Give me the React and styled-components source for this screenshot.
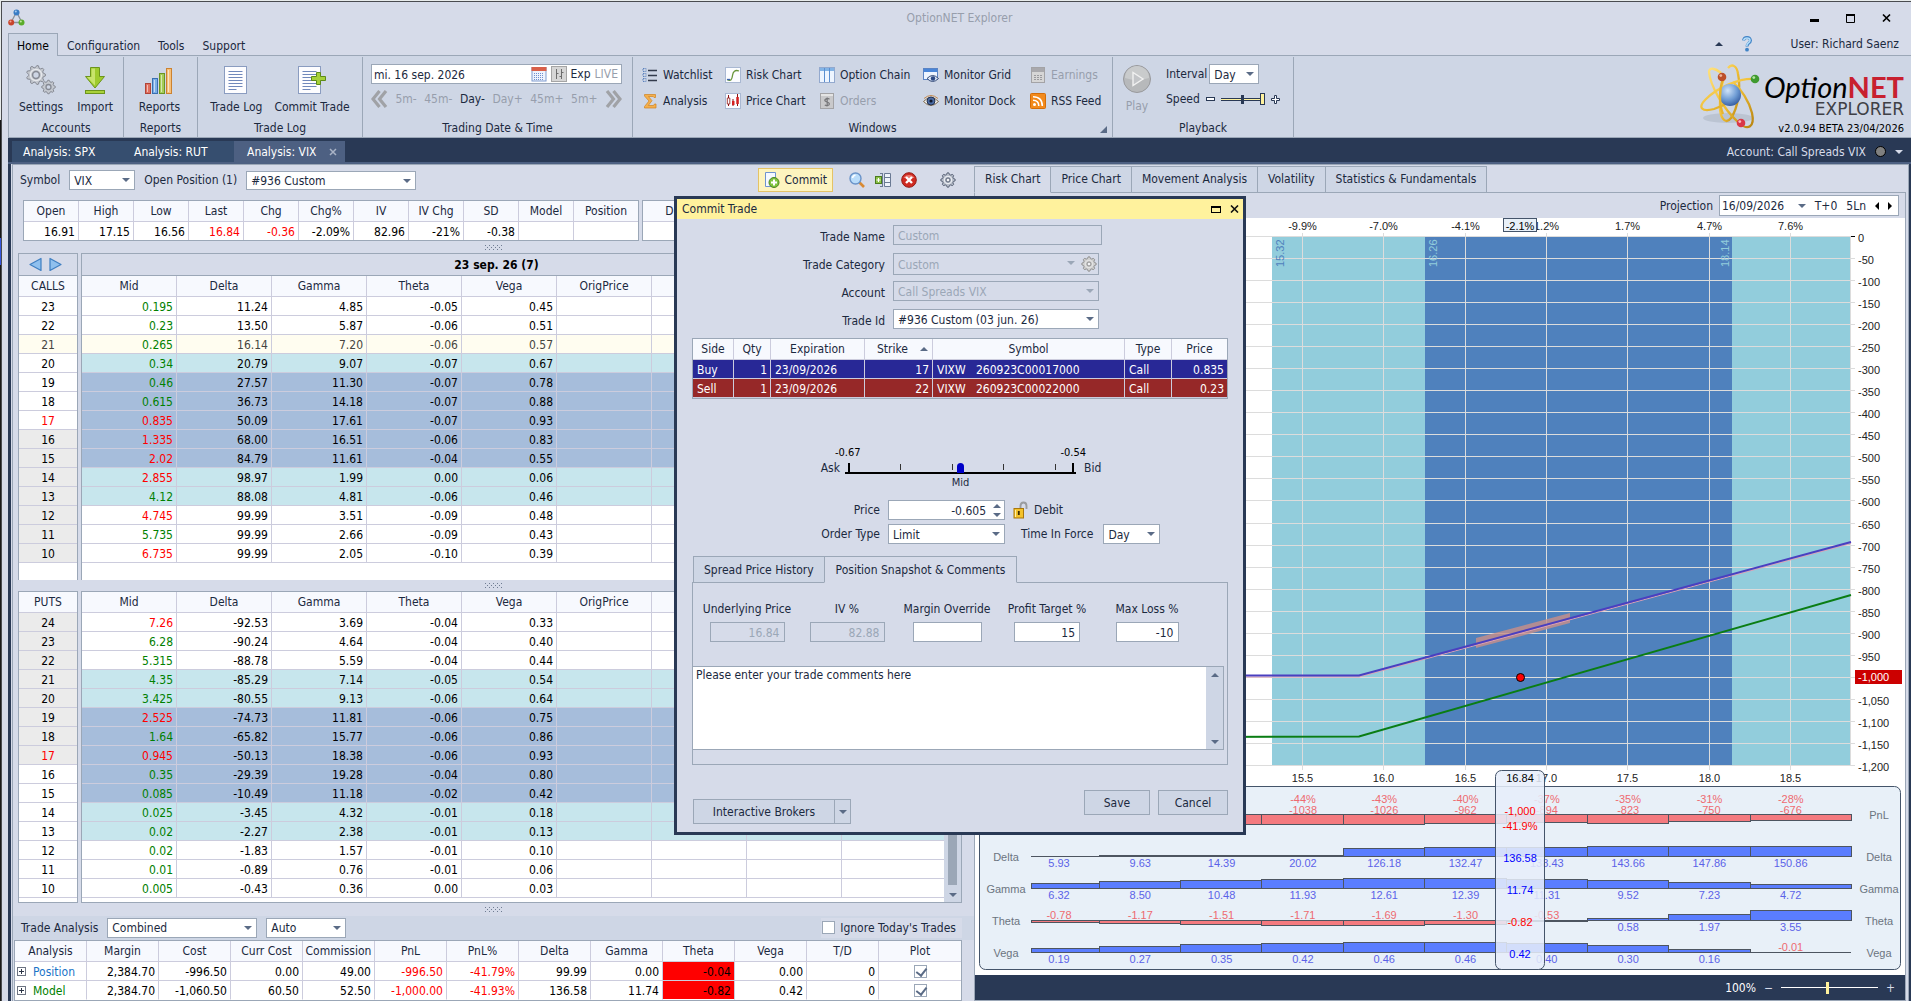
import styled, { createGlobalStyle, css } from "styled-components"

const GlobalStyle = createGlobalStyle`
  * {
    box-sizing: border-box;
  }

  body {
    margin: 0;
    background: #d6dbe9;
  }

  body, button, input, select, textarea {
    font-family: "DejaVu Sans Condensed", "DejaVu Sans", sans-serif;
    font-size: 12px;
    line-height: 14px;
    color: #1b293e;
  }

  button, input, select, textarea {
    margin: 0;
    padding: 0;
    border-radius: 0;
    outline: 0;
  }
`

const navy = "#293955"
const line = "#9ba7b7"
const panel = "#d6dbe9"
const ribbon = "#ced6e5"
const cellLine = "#ccccdd"

/* ---------- data ---------- */

const quote = [
  ["Open", "16.91"],
  ["High", "17.15"],
  ["Low", "16.56"],
  ["Last", "16.84", "#f00"],
  ["Chg", "-0.36", "#f00"],
  ["Chg%", "-2.09%"],
  ["IV", "82.96"],
  ["IV Chg", "-21%"],
  ["SD", "-0.38"],
  ["Model", ""],
  ["Position", ""],
]

const R = "#f00"
const G = "#008000"
const greekHeads = ["Mid", "Delta", "Gamma", "Theta", "Vega", "OrigPrice", "", "", ""]

// strike, mid colour, band, in the money, values
const calls = [
  [23, G, "", 0, "0.195 11.24 4.85 -0.05 0.45"],
  [22, G, "", 0, "0.23 13.50 5.87 -0.06 0.51"],
  [21, G, "hover", 0, "0.265 16.14 7.20 -0.06 0.57"],
  [20, G, "outer", 0, "0.34 20.79 9.07 -0.07 0.67"],
  [19, G, "inner", 0, "0.46 27.57 11.30 -0.07 0.78"],
  [18, G, "inner", 0, "0.615 36.73 14.18 -0.07 0.88"],
  [17, R, "inner", 0, "0.835 50.09 17.61 -0.07 0.93"],
  [16, R, "inner", 1, "1.335 68.00 16.51 -0.06 0.83"],
  [15, R, "inner", 1, "2.02 84.79 11.61 -0.04 0.55"],
  [14, R, "outer", 1, "2.855 98.97 1.99 0.00 0.06"],
  [13, G, "outer", 1, "4.12 88.08 4.81 -0.06 0.46"],
  [12, R, "", 1, "4.745 99.99 3.51 -0.09 0.48"],
  [11, G, "", 1, "5.735 99.99 2.66 -0.09 0.43"],
  [10, R, "", 1, "6.735 99.99 2.05 -0.10 0.39"],
]

const puts = [
  [24, R, "", 1, "7.26 -92.53 3.69 -0.04 0.33"],
  [23, G, "", 1, "6.28 -90.24 4.64 -0.04 0.40"],
  [22, G, "", 1, "5.315 -88.78 5.59 -0.04 0.44"],
  [21, G, "outer", 1, "4.35 -85.29 7.14 -0.05 0.54"],
  [20, G, "outer", 1, "3.425 -80.55 9.13 -0.06 0.64"],
  [19, R, "inner", 1, "2.525 -74.73 11.81 -0.06 0.75"],
  [18, G, "inner", 1, "1.64 -65.82 15.77 -0.06 0.86"],
  [17, R, "inner", 1, "0.945 -50.13 18.38 -0.06 0.93"],
  [16, G, "inner", 0, "0.35 -29.39 19.28 -0.04 0.80"],
  [15, G, "inner", 0, "0.085 -10.49 11.18 -0.02 0.42"],
  [14, G, "outer", 0, "0.025 -3.45 4.32 -0.01 0.18"],
  [13, G, "outer", 0, "0.02 -2.27 2.38 -0.01 0.13"],
  [12, G, "", 0, "0.02 -1.83 1.57 -0.01 0.10"],
  [11, G, "", 0, "0.01 -0.89 0.76 -0.01 0.06"],
  [10, G, "", 0, "0.005 -0.43 0.36 0.00 0.03"],
]

const analysisHeads = ["Analysis", "Margin", "Cost", "Curr Cost", "Commission", "PnL", "PnL%", "Delta", "Gamma", "Theta", "Vega", "T/D", "Plot"]
const analysisRows = [
  ["Position", "#1a74c8", "2,384.70 -996.50 0.00 49.00 -996.50 -41.79% 99.99 0.00 -0.04 0.00 0"],
  ["Model", G, "2,384.70 -1,060.50 60.50 52.50 -1,000.00 -41.93% 136.58 11.74 -0.82 0.42 0"],
]

const legs = [
  ["Buy", "1", "23/09/2026", "17", "VIXW   260923C00017000", "Call", "0.835"],
  ["Sell", "1", "23/09/2026", "22", "VIXW   260923C00022000", "Call", "0.23"],
]

/* ---------- shared parts ---------- */

const Arrow = styled.i`
  display: block;
  flex: none;
  width: 0;
  height: 0;
  border: 4px solid transparent;
  ${({ $dir = "down", $color = "#5a6b86", $size = 4 }) => {
    const side = { down: "top", up: "bottom", left: "right", right: "left" }[$dir]
    return css`
      border-width: ${$size}px;
      border-${side}-color: ${$color};
      border-${$dir === "down" ? "bottom" : $dir === "up" ? "top" : $dir}-width: 0;
    `
  }}
`

const SelectWrap = styled.span`
  position: relative;
  display: block;
  flex: none;
  width: ${({ $w }) => ($w ? $w + "px" : "auto")};

  select {
    appearance: none;
    display: block;
    width: 100%;
    height: ${({ $h = 20 }) => $h}px;
    padding: 1px 16px 0 4px;
    border: 1px solid ${line};
    background: #fff;
  }

  select:disabled {
    background: ${panel};
    color: ${line};
    opacity: 1;
  }

  > i {
    position: absolute;
    right: ${({ $right = 5 }) => $right}px;
    top: 8px;
    pointer-events: none;
  }
`

const Select = ({ id, label, w, h, value, disabled, right, children }) => (
  <SelectWrap $w={w} $h={h} $right={right}>
    <select id={id} aria-label={label} disabled={disabled} defaultValue={value}>
      <option>{value}</option>
    </select>
    <Arrow $color={disabled ? line : "#5a6b86"} />
    {children}
  </SelectWrap>
)

const TextInput = styled.input`
  display: block;
  width: ${({ $w }) => $w}px;
  height: 20px;
  padding: 1px ${({ $pad = 4 }) => $pad}px 0 4px;
  border: 1px solid ${line};
  background: #fff;
  text-align: ${({ $align = "left" }) => $align};

  &:disabled {
    background: ${panel};
    color: ${line};
  }
`

const Check = styled.input`
  appearance: none;
  display: block;
  flex: none;
  width: 13px;
  height: 13px;
  border: 1px solid ${line};
  background: #fff;

  &:checked::before {
    content: "";
    display: block;
    width: 5px;
    height: 8px;
    margin: 0 3px;
    border: solid #5a6b86;
    border-width: 0 2px 2px 0;
    transform: rotate(38deg);
  }
`

const DataTable = styled.table`
  width: 100%;
  table-layout: fixed;
  border-collapse: separate;
  border-spacing: 0;
  background: #fff;
  color: #000;

  th {
    height: 21px;
    padding: 0;
    font-weight: 400;
    color: #1b293e;
    background: #f7f9fe;
    white-space: nowrap;
  }

  td {
    height: 19px;
    padding: 1px 3px 0 0;
    text-align: right;
    white-space: pre;
  }

  th, td {
    border-right: 1px solid ${cellLine};
    border-bottom: 1px solid ${cellLine};
    overflow: hidden;
  }
`

const DotsRow = styled.div`
  display: flex;
  align-items: center;
  justify-content: center;
  height: ${({ $h }) => $h}px;

  svg {
    display: block;
  }
`

const Dots = ({ h }) => (
  <DotsRow $h={h}>
    <svg width="18" height="5" viewBox="0 0 18 5">
      <path d="M0 .5h18M0 4.500h18" stroke="#6f7c92" strokeDasharray="1 3" />
      <path d="M2 2.500h16" stroke="#6f7c92" strokeDasharray="1 3" />
    </svg>
  </DotsRow>
)

/* ---------- frame, title, ribbon ---------- */

const Screen = styled.div`
  min-height: 100vh;
  padding: 1px 0 0 1px;
  display: flex;
  background: linear-gradient(#e8ecec 0 120px, #151515 120px 238px, #3858e0 238px 265px, #1a1a1a 265px);
`

const AppWindow = styled.div`
  flex: 1;
  min-width: 0;
  display: flex;
  flex-direction: column;
  padding-left: 6px;
  border: solid #4a4c50;
  border-width: 1px 0 0 1px;
  background: ${panel};
`

const TitleBar = styled.header`
  display: grid;
  grid-template-columns: 1fr auto 1fr;
  align-items: center;
  height: 31px;
  color: #979eac;

  > svg {
    display: block;
  }
`

const WindowButtons = styled.div`
  display: flex;
  justify-content: flex-end;
  gap: 20px;
  padding-right: 17px;

  button {
    width: 16px;
    height: 16px;
    border: 0;
    background: none;
  }

  svg {
    display: block;
  }
`

const MenuBar = styled.nav`
  display: flex;
  height: 23px;
  border-bottom: 1px solid ${line};
`

const MenuTab = styled.a`
  height: 23px;
  padding: 6px 9px 0;
  color: ${({ $active }) => ($active ? "#000" : "#1b293e")};
  text-decoration: none;
  ${({ $active }) =>
    $active &&
    css`
      border: 1px solid ${line};
      border-bottom: 0;
      padding: 5px 8px 0;
      background: ${ribbon};
    `}
`

const MenuEnd = styled.div`
  display: flex;
  align-items: center;
  gap: 18px;
  margin-left: auto;
  padding-right: 12px;

  svg {
    display: block;
    margin-right: 20px;
  }
`

const RibbonBar = styled.section`
  display: flex;
  height: 82px;
  padding-top: 1px;
  background: ${ribbon};
  border: solid ${line};
  border-width: 0 0 1px 1px;
`

const Group = styled.div`
  display: flex;
  flex-direction: column;
  flex: none;
  width: ${({ $w }) => $w}px;
  border-right: 1px solid ${line};
`

const GroupBody = styled.div`
  flex: 1;
  display: flex;
  justify-content: center;
  gap: ${({ $gap = 12 }) => $gap}px;
  padding: ${({ $pad = "8px 8px 0" }) => $pad};
`

const GroupTitle = styled.div`
  position: relative;
  height: 16px;
  text-align: center;

  svg {
    position: absolute;
    right: 5px;
    bottom: 4px;
  }
`

const BigButton = styled.button`
  display: flex;
  flex-direction: column;
  align-items: center;
  gap: 5px;
  height: 50px;
  border: 0;
  background: none;
  white-space: nowrap;

  &:disabled {
    color: #979eac;
  }
`

const Stack = styled.div`
  display: flex;
  flex-direction: column;
  gap: ${({ $gap = 8 }) => $gap}px;
  width: 100%;
`

const DateField = styled.div`
  display: flex;
  align-items: center;
  gap: 4px;
  height: 20px;
  padding-right: 3px;
  border: 1px solid ${line};
  background: #fff;

  input {
    flex: 1;
    min-width: 0;
    height: 18px;
    padding: 1px 2px 0;
    border: 0;
    background: none;
  }

  button {
    border: 0;
    background: none;
  }

  button:disabled {
    color: #979eac;
  }
`

const StepRow = styled.div`
  display: flex;
  align-items: center;
  justify-content: space-between;

  button {
    border: 0;
    background: none;
  }

  button:disabled {
    color: #979eac;
  }

  svg {
    display: block;
  }
`

const WindowGrid = styled.div`
  flex: 1;
  display: grid;
  grid-template-columns: 83px 94px 104px 107px 1fr;
  grid-auto-rows: 26px;
`

const SmallButton = styled.button`
  display: flex;
  align-items: center;
  gap: 5px;
  border: 0;
  background: none;
  white-space: nowrap;

  &:disabled {
    color: #979eac;
  }
`

const InlineField = styled.div`
  display: flex;
  align-items: center;
  gap: ${({ $gap = 2 }) => $gap}px;
  height: 20px;
`

const Range = styled.input`
  appearance: none;
  width: ${({ $w }) => $w}px;
  height: 13px;
  background: ${({ $ticked, $track }) =>
    ($ticked ? `linear-gradient(${navy}, ${navy}) center / 3px 9px no-repeat, linear-gradient(${navy} 1px, #fff29d 1px 2px, ${navy} 2px)` : `linear-gradient(${$track}, ${$track})`)}
    center / 100% ${({ $ticked }) => ($ticked ? 3 : 1)}px no-repeat;

  &::-webkit-slider-thumb {
    appearance: none;
    width: ${({ $thumb = 4 }) => $thumb}px;
    height: 12px;
    border: ${({ $edge }) => ($edge ? "1px solid " + $edge : 0)};
    background: #fff29d;
  }
`

const Brand = styled.div`
  display: flex;
  align-items: flex-start;
  justify-content: flex-end;
  gap: 2px;
  flex: 1;
  padding: 6px 7px 0 0;
`

const BrandText = styled.div`
  display: flex;
  flex-direction: column;
  align-items: flex-end;
  padding-top: 9px;
  color: #000;

  strong {
    font: italic 400 29px/30px Lato, sans-serif;
    white-space: nowrap;
  }

  b {
    font-style: normal;
    font-weight: 700;
    color: #c8202f;
  }

  em {
    font: 400 17px/14px "DejaVu Sans", sans-serif;
    color: #3f4046;
  }

  small {
    padding-top: 6px;
    font-size: 11px;
  }
`

const DocBar = styled.div`
  display: flex;
  height: 26px;
  padding: 3px 0 0 4px;
  background: ${navy};
  border-bottom: 2px solid #4d6082;
`

const DocTab = styled.a`
  display: flex;
  align-items: center;
  gap: ${({ $active }) => ($active ? 12 : 17)}px;
  width: 111px;
  padding-left: ${({ $active }) => ($active ? 13 : 11)}px;
  background: ${({ $active }) => ($active ? "#4d6082" : "#364e6f")};
  color: #fff;
  text-decoration: none;
  white-space: nowrap;
`

const AccountInfo = styled.div`
  display: flex;
  align-items: center;
  gap: 9px;
  margin-left: auto;
  padding: 0 8px 0 0;
  color: ${panel};

  span {
    width: 11px;
    height: 11px;
    border: 1px solid #000;
    border-radius: 50%;
    background: #808080;
  }
`

/* ---------- workspace ---------- */

const Workspace = styled.main`
  flex: 1;
  display: flex;
  padding-left: 1px;
  border: solid ${navy};
  border-width: 0 2px 0 3px;
`

const WorkspaceInner = styled.div`
  flex: 1;
  display: flex;
  border: 1px solid ${line};
  border-bottom: 0;
`

const LeftPane = styled.section`
  flex: 0 1 961px;
  min-width: 0;
  display: flex;
  flex-direction: column;
`

const SymbolBar = styled.div`
  display: flex;
  align-items: center;
  gap: 9px;
  height: 35px;
  padding: 0 18px 5px 7px;
`

const SymbolTools = styled.div`
  display: flex;
  align-items: center;
  gap: 10px;
  margin-left: auto;

  button {
    height: 16px;
    border: 0;
    background: none;
  }

  svg {
    display: block;
  }

  button:last-child {
    margin-left: 13px;
  }
`

const CommitButton = styled.button`
  && {
    display: flex;
    align-items: center;
    gap: 5px;
    height: 24px;
    padding: 0 5px;
    margin-right: 6px;
    border: 1px solid #e5c365;
    background: #fdf4bf;
  }
`

const QuoteRow = styled.div`
  display: flex;
  gap: 3px;
  padding: 0 12px 0 10px;

  > div {
    border: 1px solid ${line};
  }

  > div:last-child {
    flex: 1;
    overflow: hidden;
  }

  tr > :last-child {
    border-right: 0;
  }

  td {
    height: 18px;
    border-bottom: 0;
  }
`

const QuoteBox = styled.div`
  width: 616px;
`

const Chain = styled.div`
  display: flex;
  gap: 3px;
  height: ${({ $h }) => $h}px;
  padding: 0 12px 0 5px;
`

const ChainBox = styled.div`
  display: flex;
  flex-direction: column;
  flex: ${({ $w }) => ($w ? "0 0 " + $w + "px" : "1")};
  min-width: 0;
  overflow: hidden;
  border: 1px solid ${line};
  border-bottom-width: ${({ $open }) => ($open ? 0 : 1)}px;
  background: #fff;
`

const ChainNav = styled.div`
  display: flex;
  align-items: center;
  justify-content: ${({ $start }) => ($start ? "flex-start" : "center")};
  flex: none;
  height: 22px;
  padding: ${({ $start }) => ($start ? "0 0 1px 10px" : "0 50px 0 0")};
  gap: 7px;
  border-bottom: 1px solid ${line};
  background: ${panel};
  color: #000;
  font-weight: 700;

  button {
    border: 0;
    background: none;
  }

  svg {
    display: block;
  }
`

const ChainScroll = styled.div`
  flex: 1;
  display: flex;
  align-items: flex-start;
`

const StrikeTable = styled(DataTable)`
  th, td {
    padding-right: 0;
    border-right: 0;
    text-align: center;
  }
`

const StrikeCell = styled.td`
  background: ${({ $itm, $band }) => ($itm ? "#ebebeb" : $band === "hover" ? "#fffdf0" : "#fff")};
  color: ${({ $atm, $band }) => ($atm ? "#f00" : $band === "hover" ? "#45453f" : "#000")};
`

const bandColor = { inner: "#a6bddb", outer: "#c7e6ed", hover: "#fffdf0" }

const GreekRow = styled.tr`
  background: ${({ $band }) => bandColor[$band] || "#fff"};
  color: ${({ $band }) => ($band === "hover" ? "#45453f" : "#000")};
`

const GridWrap = styled.div`
  flex: 1;
  min-width: 0;

  tr > :last-child {
    border-right: 0;
  }
`

const ScrollTrack = styled.div`
  display: flex;
  flex-direction: column;
  align-items: center;
  justify-content: space-between;
  align-self: stretch;
  flex: none;
  width: 17px;
  padding: 6px 0 5px;
  background: ${ribbon};

  span {
    flex: 1;
    width: 9px;
    margin: 3px 0 8px;
    background: ${line};
  }
`

const AnalysisBar = styled.div`
  display: flex;
  align-items: center;
  gap: 9px;
  height: 24px;
  padding: 0 12px 1px 8px;
  background: ${ribbon};
`

const IgnoreBox = styled.div`
  display: flex;
  align-items: center;
  gap: 5px;
  height: 20px;
  margin-left: auto;
  padding: 0 6px 0 1px;
  background: ${panel};
`

const AnalysisBox = styled.div`
  margin: 0 12px 0 1px;
  border: 1px solid ${line};

  tr > :last-child {
    border-right: 0;
  }

  tbody tr:last-child td {
    border-bottom-color: #fff;
  }

  td:first-child {
    text-align: left;
    padding-left: 2px;
  }

  td:last-child {
    padding: 0;
  }

  td input {
    margin: 0 auto;
  }
`

const RowName = styled.span`
  display: flex;
  align-items: center;
  gap: 7px;
  color: ${({ $c }) => $c};
`

const ValueCell = styled.td`
  color: ${({ $c }) => $c};
  background: ${({ $bg }) => $bg};
`

const RightPane = styled.section`
  flex: 1;
  min-width: 0;
  display: flex;
  flex-direction: column;
  padding: 1px 2px 0 0;
`

const ChartTabs = styled.div`
  display: flex;
  align-items: stretch;
  height: 27px;
`

const ChartTab = styled.button`
  padding: 0 10px 1px;
  border: 1px solid ${line};
  border-left-width: ${({ $active }) => ($active ? 1 : 0)}px;
  border-bottom-color: ${({ $active }) => ($active ? panel : line)};
  background: ${({ $active }) => ($active ? panel : ribbon)};
  white-space: nowrap;
`

const TabFill = styled.div`
  flex: 1;
  border-bottom: 1px solid ${line};
`

const ChartFrame = styled.div`
  flex: 1;
  display: flex;
  flex-direction: column;
  border: 1px solid ${line};
  border-top: 0;
  background: #fff;
`

const ProjectionBar = styled.div`
  display: flex;
  align-items: center;
  justify-content: flex-end;
  gap: 6px;
  height: 25px;
  padding-right: 6px;
  background: ${panel};
`

const ProjectionField = styled.div`
  display: flex;
  align-items: center;
  gap: 9px;
  width: 180px;
  height: 21px;
  padding-right: 6px;
  border: 1px solid ${line};
  background: #fff;

  input {
    flex: 1;
    min-width: 0;
    padding: 0 2px;
    border: 0;
  }

  button {
    border: 0;
    background: none;
  }
`

const ChartSvg = styled.svg`
  display: block;
  width: 100%;
  font-family: "Liberation Sans", Arial, sans-serif;
  font-size: 11px;
`

const ZoomBar = styled.footer`
  display: flex;
  align-items: center;
  justify-content: flex-end;
  gap: 8px;
  height: 25px;
  margin-top: auto;
  padding-right: 10px;
  background: ${navy};
  color: #fff;

  button {
    width: 9px;
    border: 0;
    background: none;
    color: ${panel};
  }
`

/* ---------- commit trade dialog ---------- */

const Dialog = styled.section`
  position: absolute;
  left: 674px;
  top: 196px;
  width: 572px;
  border: 3px solid ${navy};
  background: ${panel};
`

const DialogTitle = styled.header`
  display: flex;
  align-items: center;
  gap: 9px;
  height: 20px;
  padding: 0 4px 0 5px;
  background: #fff29d;

  button {
    border: 0;
    background: none;
  }

  svg {
    display: block;
  }

  h2 {
    flex: 1;
    margin: 0;
    font-size: 12px;
    font-weight: 400;
  }
`

const DialogBody = styled.div`
  padding: 6px 15px 8px;
`

const FieldRow = styled.div`
  display: grid;
  grid-template-columns: ${({ $label = 193 }) => $label}px auto 1fr;
  column-gap: 8px;
  align-items: start;
  height: ${({ $h = 28 }) => $h}px;

  > label {
    padding-top: ${({ $h }) => ($h ? 3 : 5)}px;
    text-align: right;
  }
`

const CategoryGear = styled.span`
  position: absolute;
  right: 2px;
  top: 3px;
`

const LegBox = styled.div`
  margin-top: 1px;
  border: 1px solid ${line};

  tr > :last-child {
    border-right: 0;
  }
`

const LegRow = styled.tr`
  color: #fff;
  background: ${({ $side }) => ($side === "Buy" ? "#282896" : "#962828")};

  td:nth-child(1), td:nth-child(3), td:nth-child(5), td:nth-child(6) {
    text-align: left;
    padding-left: 4px;
  }
`

const SortHead = styled.span`
  display: flex;
  align-items: center;
  justify-content: flex-end;
  gap: 12px;
  padding-right: 4px;
`

const Gauge = styled.div`
  padding: 47px 0 10px 143px;
`

const GaugeEnds = styled.div`
  display: flex;
  justify-content: space-between;
  width: 251px;
  color: #000;
  font-size: 11px;
`

const GaugeRow = styled.div`
  display: flex;
  align-items: center;
  gap: 5px;
  height: 16px;
  margin-left: -40px;

  > span {
    width: 45px;
    text-align: right;
  }
`

const GaugeTrack = styled.div`
  position: relative;
  width: 231px;
  height: 14px;
  margin-right: 3px;

  svg {
    display: block;
  }

  input {
    position: absolute;
    inset: 0;
    appearance: none;
    width: 100%;
    height: 13px;
    background: none;
  }

  input::-webkit-slider-thumb {
    appearance: none;
    width: 7px;
    height: 10px;
    margin-top: 1px;
    border-radius: 4px 4px 0 0;
    background: #0000c8;
  }
`

const GaugeMid = styled.div`
  width: 251px;
  text-align: center;
  font-size: 11px;
`

const SpinWrap = styled.div`
  position: relative;
`

const SpinButtons = styled.div`
  position: absolute;
  right: 4px;
  top: 4px;
  display: flex;
  flex-direction: column;
  gap: 5px;

  button {
    border: 0;
    background: none;
  }
`

const AfterField = styled.div`
  display: flex;
  align-items: center;
  gap: ${({ $gap }) => $gap}px;
  height: 20px;
  padding-left: ${({ $indent = 0 }) => $indent}px;
  white-space: nowrap;

  svg {
    display: block;
  }
`

const SnapTabs = styled.div`
  display: flex;
  height: 27px;
  margin: 8px 0 -1px 1px;
`

const SnapTab = styled.button`
  position: relative;
  height: 27px;
  padding: 0 ${({ $active }) => ($active ? 11 : 10)}px;
  border: 1px solid ${line};
  border-bottom-color: ${({ $active }) => ($active ? panel : line)};
  background: ${({ $active }) => ($active ? panel : ribbon)};
  margin-left: ${({ $active }) => ($active ? -1 : 0)}px;
  white-space: nowrap;
`

const SnapPanel = styled.div`
  height: 183px;
  padding: 19px 3px 0 0;
  border: 1px solid ${line};
`

const SnapFields = styled.div`
  display: grid;
  grid-template-columns: repeat(5, 100px);
  padding-left: 4px;
  margin-bottom: 24px;

  > div {
    display: flex;
    flex-direction: column;
    align-items: center;
    gap: 6px;
    white-space: nowrap;
  }
`

const CommentBox = styled.div`
  display: flex;
  height: 84px;
  border: 1px solid ${line};
  border-left: 0;
  background: #fff;

  textarea {
    flex: 1;
    padding: 1px 3px;
    border: 0;
    resize: none;
  }
`

const DialogFoot = styled.div`
  display: flex;
  align-items: flex-start;
  gap: 8px;
  padding: 25px 0 0 1px;
`

const PushButton = styled.button`
  width: ${({ $w }) => $w}px;
  height: 25px;
  border: 1px solid ${line};
  background: ${ribbon};
`

const SplitButton = styled.div`
  display: flex;
  margin: 9px auto 0 0;

  ${PushButton} + ${PushButton} {
    display: flex;
    align-items: center;
    justify-content: center;
    margin-left: -1px;
  }
`

/* ---------- icons ---------- */

const gearPath = (cx, cy, r, teeth) => {
  const pts = []
  for (let i = 0; i < teeth * 4; i++) {
    const a = ((i - 0.5) / (teeth * 4)) * Math.PI * 2
    const rr = i % 4 < 2 ? r : r * 0.78
    pts.push((cx + rr * Math.cos(a)).toFixed(2) + "," + (cy + rr * Math.sin(a)).toFixed(2))
  }
  return "M" + pts.join("L") + "Z"
}

const GearIcon = ({ size = 16, muted }) => (
  <svg width={size} height={size} viewBox="0 0 16 16">
    <path d={gearPath(8, 8, 7.2, 8)} fill={muted ? "#cfcfcf" : "#b3bac7"} stroke={muted ? "#8d8d8d" : "#566074"} />
    <circle cx="8" cy="8" r="3.8" fill="none" stroke={muted ? "#e6e6e6" : "#f2f4f8"} />
    <circle cx="8" cy="8" r="2" fill="#f2f3f5" stroke={muted ? "#8d8d8d" : "#566074"} />
  </svg>
)

const MoleculeIcon = () => (
  <svg width="17" height="17" viewBox="0 0 17 17">
    <path d="M8.500 3L3 13.500H14Z" fill="none" stroke="#8b9099" strokeWidth="1.300" />
    <circle cx="8.500" cy="3.500" r="3" fill="#3a7cc4" />
    <circle cx="3.200" cy="13.500" r="3" fill="#c8452c" />
    <circle cx="13.500" cy="13.500" r="3" fill="#5aac2a" />
    <circle cx="7.800" cy="2.600" r="1" fill="#a9cdf0" />
    <circle cx="2.500" cy="12.600" r="1" fill="#f0a896" />
    <circle cx="12.800" cy="12.600" r="1" fill="#c2e8a4" />
  </svg>
)

const SettingsIcon = () => (
  <svg width="32" height="30" viewBox="0 0 32 30">
    <path d={gearPath(11, 10, 9.5, 9)} fill="#c4c8cf" stroke="#868a94" />
    <circle cx="11" cy="10" r="5.600" fill="none" stroke="#e6e8ec" strokeWidth="1.200" />
    <circle cx="11" cy="10" r="3.400" fill="#ced6e5" stroke="#868a94" strokeWidth="1.500" />
    <path d={gearPath(23.5, 22, 6.8, 8)} fill="#c4c8cf" stroke="#868a94" />
    <circle cx="23.500" cy="22" r="2.500" fill="#ced6e5" stroke="#868a94" strokeWidth="1.300" />
  </svg>
)

const ImportIcon = () => (
  <svg width="32" height="30" viewBox="0 0 32 30">
    <path d="M11.500 2.500h9v9h5L16 23 6.500 11.500h5Z" fill="#9fcb2e" stroke="#6c951b" />
    <path d="M12.500 3.500h3.500v17l-8-8.500h4.500Z" fill="#c8e46c" />
    <rect x="6.500" y="25.500" width="19" height="3" fill="#a9d13a" stroke="#6c951b" />
  </svg>
)

const ReportsIcon = () => (
  <svg width="32" height="30" viewBox="0 0 32 30">
    <rect x="2.500" y="18.500" width="5" height="10" fill="#e0705f" stroke="#b04438" />
    <rect x="9.500" y="13.500" width="5" height="15" fill="#7caee6" stroke="#3a6fb0" />
    <rect x="16.500" y="8.500" width="5" height="20" fill="#a5cc57" stroke="#6b9425" />
    <rect x="23.500" y="3.500" width="5" height="25" fill="#f6c07a" stroke="#cc8230" />
    <path d="M4.500 20v7M11.500 15v12M18.500 10v17M25.500 5v22" stroke="#fff" strokeOpacity=".55" />
  </svg>
)

const docLines = "M4.500 6.500h14M4.500 9.500h14M4.500 12.500h14M4.500 15.500h14M4.500 18.500h14M4.500 21.500h14M4.500 24.500h8"

const TradeLogIcon = ({ plus }) => (
  <svg width="32" height="30" viewBox="0 0 32 30">
    <g transform={plus ? "translate(2 0)" : "translate(4 0)"}>
      <rect x=".5" y="1.500" width="22" height="27" fill="#fdfdff" stroke="#8a9cc0" />
      <path d={docLines} stroke="#7088bb" />
    </g>
    {plus && (
      <path
        d="M20.500 7.500h4v4h5v4h-5v4h-4v-4h-5v-4h5Z"
        fill="#a5d03a"
        stroke="#5d8b18"
      />
    )}
  </svg>
)

const PlayIcon = () => (
  <svg width="30" height="30" viewBox="0 0 30 30">
    <circle cx="15" cy="15" r="13.500" fill="#b7b9bb" stroke="#98999c" />
    <path d="M3 14a12 12 0 0 1 24 0q-12 4-24 0Z" fill="#c9cbcc" />
    <path d="M11 8.500V21.500L21 15Z" fill="#c3c5c8" stroke="#f1f1f1" strokeWidth="1.400" />
  </svg>
)

const CalendarIcon = () => (
  <svg width="16" height="16" viewBox="0 0 16 16">
    <rect x="1" y="1.500" width="14" height="13.500" fill="#eef3fd" stroke="#7f9bcf" />
    <rect x=".5" y="1" width="15" height="4" fill="#d9604a" />
    <path d="M3 7.500h10M3 9.500h10M3 11.500h10M3 13.500h10" stroke="#6f8fcf" strokeDasharray="1 1" />
  </svg>
)

const BarsIcon = () => (
  <svg width="16" height="16" viewBox="0 0 16 16">
    <rect x=".5" y=".5" width="15" height="15" fill="#d6d6d6" stroke="#a5a5a5" />
    <path d="M5.500 3v10M5.500 7.500h2M10.500 3v10M8.500 10.500h2M10.500 6.500h2" stroke="#6d6d6d" fill="none" />
  </svg>
)

const Chevrons = ({ flip }) => (
  <svg width="17" height="18" viewBox="0 0 17 18">
    <path
      d="M8.500 1L2 9l6.500 8M15 1L8.500 9l6.500 8"
      fill="none"
      stroke="#a0a2a6"
      strokeWidth="3.200"
      transform={flip ? "translate(17 0) scale(-1 1)" : undefined}
    />
  </svg>
)

const smallIcons = {
  Watchlist: (
    <>
      <path d="M1 1.500h3v3H1ZM1 6.500h3v3H1ZM1 11.500h3v3H1Z" fill="none" stroke="#5c82bd" strokeDasharray="1.500 1" />
      <path d="M6 3.500h9M6 8.500h9M6 13.500h9" stroke="#333b4c" strokeWidth="1.500" />
    </>
  ),
  "Risk Chart": (
    <>
      <rect x=".5" y=".5" width="15" height="15" fill="#fbfcff" stroke="#a9b8d2" />
      <path d="M2 12.500c4 2 5 0 5.500-4S10 2.500 14 4" fill="none" stroke="#67943a" strokeWidth="1.300" />
      <path d="M2 12.500h3" stroke="#3d64ad" strokeWidth="1.300" />
    </>
  ),
  "Option Chain": (
    <>
      <rect x=".5" y=".5" width="15" height="15" fill="#eef5ff" stroke="#93a9ce" />
      <path d="M1 1h14v3H1Z" fill="#83b4e6" />
      <path d="M5.500 1v14M10.500 1v14" stroke="#5b8fd0" />
    </>
  ),
  "Monitor Grid": (
    <>
      <rect x=".5" y="1.500" width="14" height="11" fill="#eef5ff" stroke="#5b84c4" />
      <path d="M1 2h13v3H1Z" fill="#4a86d8" />
      <path d="M4 11.500q5.500-6 11.500 0q-6 6-11.500 0Z" fill="#dce6f5" stroke="#364c78" />
      <circle cx="10" cy="11.500" r="2.200" fill="#2d4a85" />
    </>
  ),
  Earnings: (
    <>
      <rect x="1.500" y=".5" width="13" height="15" fill="#d6d6d6" stroke="#a3a3a6" />
      <path d="M2 1h12v4H2Z" fill="#a9a9ad" />
      <path d="M4 8.500h8M4 10.500h8M4 12.500h8" stroke="#9a9a9e" strokeDasharray="2 1" />
    </>
  ),
  Analysis: (
    <path d="M2.500 1.500h11v3h-1.500l-.8-1H6.500L10 7.700 6.300 12.500h5.200l1-1.500H14v4H2.500v-1.500L7 8 2.500 3Z" fill="#f5b04c" stroke="#cf8321" strokeWidth=".7" />
  ),
  "Price Chart": (
    <>
      <rect x=".5" y=".5" width="15" height="15" fill="#fbfcff" stroke="#a9b8d2" />
      <path d="M3.500 2v11M8 6v7M12.500 1v12" stroke="#8e1010" />
      <path d="M2.300 5h2.500v6H2.300Z" fill="#fff" stroke="#8e1010" strokeWidth=".8" />
      <path d="M7 8h2.500v4H7ZM11.300 4h2.500v7h-2.500Z" fill="#d42020" />
    </>
  ),
  Orders: (
    <>
      <rect x="1.500" y=".5" width="13" height="15" fill="#c9c9cb" stroke="#a3a3a6" />
      <path d="M2 1h12v2H2Z" fill="#e4e4e4" />
      <path d="M10.500 6.200q-2-1.500-4 0t1.500 2.800 1.800 3q-2.200 1.200-4 0M8.200 4.500v9" fill="none" stroke="#77777a" strokeWidth="1.200" />
    </>
  ),
  "Monitor Dock": (
    <>
      <path d="M.5 8.500q7.500-8 15 0q-7.500 8-15 0Z" fill="#f3f3f0" stroke="#7e6a4d" />
      <circle cx="8" cy="8" r="4" fill="#4a6ca6" stroke="#26324c" />
      <circle cx="8" cy="8" r="1.600" fill="#10182b" />
      <path d="M1 5.500q7-6 14 0" fill="none" stroke="#c58a4e" />
    </>
  ),
  "RSS Feed": (
    <>
      <rect x=".5" y=".5" width="15" height="15" rx="1" fill="#f28a1c" stroke="#d36d08" />
      <circle cx="4.500" cy="11.500" r="1.500" fill="#fff" />
      <path d="M3 7.200q5.800 0 5.800 5.800M3 3.700q9.300 0 9.300 9.300" fill="none" stroke="#fff" strokeWidth="1.600" />
    </>
  ),
}

const SmallIcon = ({ name }) => (
  <svg width="16" height="16" viewBox="0 0 16 16">
    {smallIcons[name]}
  </svg>
)

const AtomLogo = () => (
  <svg width="62" height="70" viewBox="0 0 62 70">
    <defs>
      <radialGradient id="core" cx=".4" cy=".3" r=".7">
        <stop offset="0" stopColor="#cfe2f8" />
        <stop offset=".6" stopColor="#6f9cd4" />
        <stop offset="1" stopColor="#3a62a5" />
      </radialGradient>
      <linearGradient id="gold" x1="0" y1="0" x2="1" y2="1">
        <stop offset="0" stopColor="#ffe07a" />
        <stop offset=".5" stopColor="#f0bf35" />
        <stop offset="1" stopColor="#b98510" />
      </linearGradient>
    </defs>
    <ellipse cx="28" cy="55" rx="25" ry="5" fill="#b4bccb" opacity=".7" />
    <path d="M28 5c4-5 9-2 10 6 3 14 0 34-7 44-6 8-12-1-11-16 0-9 2-18 4-24" fill="none" stroke="url(#gold)" strokeWidth="2.300" />
    <path d="M21 10C15 5 9 4 9 9c1 12 13 36 30 51 9 8 16 4 13-10-3-12-11-24-19-31" fill="none" stroke="url(#gold)" strokeWidth="2.300" />
    <path d="M54 16C40 15 18 24 6 36c-9 9-4 13 8 10 9-3 19-9 25-16" fill="none" stroke="url(#gold)" strokeWidth="2.300" />
    <circle cx="30" cy="32" r="11" fill="url(#core)" />
    <path d="M23 16c-4 11-4 25 0 35" fill="none" stroke="#e7b52e" strokeWidth="2.300" />
    <circle cx="22" cy="14" r="4.300" fill="#bd4f2a" />
    <circle cx="20.800" cy="12.600" r="1.400" fill="#efb59d" />
    <circle cx="55" cy="16" r="4.300" fill="#3f9a2f" />
    <circle cx="53.800" cy="14.600" r="1.400" fill="#b6e6a4" />
    <circle cx="41" cy="60" r="4.300" fill="#d93848" />
    <circle cx="39.800" cy="58.600" r="1.400" fill="#f9b9c0" />
  </svg>
)

const HelpIcon = () => (
  <svg width="12" height="16" viewBox="0 0 12 16">
    <path d="M2.500 4.500Q3 1.500 6 1.500T9.500 4.500Q9.500 6 7.500 7.300 6 8.500 6 10.500" fill="none" stroke="#3f83c6" strokeWidth="3" />
    <path d="M2.700 4.300Q3 2 6 2T9 4.500Q9 6 7.200 7 5.800 8 5.800 10" fill="none" stroke="#b3dcf8" strokeWidth="1.600" />
    <circle cx="6" cy="13.700" r="1.900" fill="#3f83c6" />
  </svg>
)

const CommitIcon = () => (
  <svg width="16" height="18" viewBox="0 0 16 18">
    <path d="M1.500 1.500h10v14h-10Z" fill="#f5f9ff" stroke="#6f93cf" />
    <circle cx="10" cy="11.500" r="5" fill="#7fc33d" stroke="#4a8420" />
    <path d="M10 8.500v6M7 11.500h6" stroke="#fff" strokeWidth="2" />
  </svg>
)

const LensIcon = () => (
  <svg width="16" height="16" viewBox="0 0 16 16">
    <path d="M10 10l5 5" stroke="#d98a33" strokeWidth="2.600" />
    <circle cx="6.500" cy="6.500" r="5.500" fill="#b9dcfa" stroke="#6a93c8" strokeWidth="1.400" />
    <path d="M3.500 6Q4 3.500 6.500 3.300" fill="none" stroke="#fff" strokeWidth="1.500" />
  </svg>
)

const ColumnsIcon = () => (
  <svg width="16" height="16" viewBox="0 0 16 16">
    <path d="M5 1.500h3M5 14.500h3M7.500 1.500v13" stroke="#6b7a94" fill="none" />
    <rect x=".5" y="4.500" width="6" height="7" fill="#8dc24a" stroke="#4b7c1e" />
    <path d="M3.500 6v4M1.500 8h4" stroke="#fff" />
    <path d="M9.500 1.500h6v13h-6ZM9.500 5.500h6M9.500 10.500h6" fill="#eef3fb" stroke="#6b7a94" />
  </svg>
)

const DeleteIcon = () => (
  <svg width="16" height="16" viewBox="0 0 16 16">
    <circle cx="8" cy="8" r="7.300" fill="#cf2b22" stroke="#951a14" />
    <path d="M2.500 6a6 5 0 0 1 11 0Z" fill="#ea7a70" />
    <path d="M5 5l6 6M11 5l-6 6" stroke="#fff" strokeWidth="2.400" />
  </svg>
)

const TriIcon = ({ flip }) => (
  <svg width="13" height="15" viewBox="0 0 13 15">
    <path d={flip ? "M1 1.500V13.500L12 7.500Z" : "M12 1.500V13.500L1 7.500Z"} fill="#8fc0ee" stroke="#3f7fc1" strokeWidth="1.200" strokeLinejoin="round" />
  </svg>
)

const LockIcon = () => (
  <svg width="15" height="18" viewBox="0 0 15 18">
    <path d="M7.500 9V5q0-3.500 3-3.500T13.500 5v3" fill="none" stroke="#9a9c9f" strokeWidth="1.900" />
    <rect x="1" y="7.500" width="9.500" height="9.500" fill="#f4c22a" stroke="#a9770c" />
    <path d="M2.500 9v7" stroke="#fff0a8" />
    <path d="M5.800 10v4" stroke="#3a2a00" strokeWidth="1.800" />
  </svg>
)

const PlusBox = () => (
  <svg width="9" height="9" viewBox="0 0 9 9">
    <rect x=".5" y=".5" width="8" height="8" fill="#fff" stroke="#6d7482" />
    <path d="M2 4.500h5M4.500 2v5" stroke="#2b3446" />
  </svg>
)

const MaxIcon = ({ w = 9, h = 8 }) => (
  <svg width={w} height={h} viewBox={`0 0 ${w} ${h}`}>
    <rect x=".5" y=".5" width={w - 1} height={h - 1} fill="none" stroke="#000" />
    <path d={`M0 1h${w}`} stroke="#000" strokeWidth="2" />
  </svg>
)

const CloseIcon = () => (
  <svg width="9" height="8" viewBox="0 0 9 8">
    <path d="M1 0.500l7 7M8 0.500l-7 7" stroke="#111" strokeWidth="1.600" />
  </svg>
)

/* ---------- chart ---------- */

const px = (price) => Math.round((price - 15.5) * 162.6 + 327) + 0.5
const py = (pnl) => Math.round(pnl * -0.4408) + 18.5

const Label = styled.text`
  fill: ${({ $c = "#222" }) => $c};
  text-anchor: ${({ $anchor = "middle" }) => $anchor};
`

const ticks = [
  [15.5, "-9.9%"], [16, "-7.0%"], [16.5, "-4.1%"],
  [17, "1.2%"], [17.5, "1.7%"], [18, "4.7%"], [18.5, "7.6%"],
]
const pnlTicks = Array.from({ length: 25 }, (_, i) => 0 - i * 50)
const edges = [56, 124, 205, 286, 368, 449, 531, 612, 693, 775, 876]

const greeks = [
  { name: "PnL", y: 596, h: [-10, -10, -10, -10, -10, -9, -8, -9, -7, -6] },
  { name: "Delta", y: 638, h: [0, 1, 1, 1, 8, 9, 9, 10, 10, 10], v: "5.93 9.63 14.39 20.02 126.18 132.47 138.43 143.66 147.86 150.86", now: "136.58" },
  { name: "Gamma", y: 670, h: [5, 7, 8, 9, 10, 10, 9, 8, 6, 4], v: "6.32 8.50 10.48 11.93 12.61 12.39 11.31 9.52 7.23 4.72", now: "11.74" },
  { name: "Theta", y: 702, h: [-2, -3, -4, -5, -5, -4, -1, 2, 6, 10], v: "-0.78 -1.17 -1.51 -1.71 -1.69 -1.30 -0.53 0.58 1.97 3.55", now: "-0.82" },
  { name: "Vega", y: 734, h: [4, 6, 8, 9, 10, 10, 9, 7, 3, 0], v: "0.19 0.27 0.35 0.42 0.46 0.46 0.40 0.30 0.16 -0.01", now: "0.42" },
]
const pnlPct = ["-44%", "-43%", "-40%", "-37%", "-35%", "-31%", "-28%"]
const pnlVal = ["-1038", "-1026", "-962", "-894", "-823", "-750", "-676"]

const GreekStrip = ({ g }) => {
  const values = g.v ? g.v.split(" ") : []
  return (
    <g>
      <path d={`M56 ${g.y + 0.5}H876`} stroke="#4d5560" />
      {g.h.map((h, i) => (
        <rect
          key={i}
          x={edges[i] + 0.5}
          y={h > 0 ? g.y - h + 0.5 : g.y + 0.5}
          width={edges[i + 1] - edges[i]}
          height={Math.abs(h)}
          fill={h < 0 ? "#f47a7f" : "#5a7dff"}
          stroke="#4d5560"
        />
      ))}
      {values.map((v, i) => (
        <Label key={i} x={84 + i * 81.3} y={v < 0 ? g.y - 1 : g.y + 11} $c={v < 0 ? "#ee6a70" : "#5b62e8"}>
          {v}
        </Label>
      ))}
      {g.v && <Label x="31" y={g.y + 5} $c="#6b7480">{g.name}</Label>}
      <Label x="904" y={g.y + 5} $c="#6b7480">{g.name}</Label>
    </g>
  )
}

const RiskChart = () => (
  <ChartSvg viewBox="0 0 930 756" role="img" aria-label="Risk chart">
    <rect x="297" y="19" width="579" height="529" fill="#92cddc" />
    <rect x="450" y="19" width="307" height="529" fill="#4f81bd" />
    {pnlTicks.map((v) => (
      <g key={v}>
        <path d={`M56 ${py(v)}H880`} stroke="#dcdcdc" />
        {v !== -1000 && (
          <Label x="883" y={py(v) + 5} $anchor="start">{v.toLocaleString("en-US")}</Label>
        )}
      </g>
    ))}
    <path d="M876 18.500h4" stroke="#000" />
    {ticks.map(([p, pct]) => (
      <g key={p}>
        <path d={`M${px(p)} 15V552`} stroke="#dcdcdc" />
        <Label x={px(p)} y="12">{pct}</Label>
        <Label x={px(p)} y="564">{p.toFixed(1)}</Label>
      </g>
    ))}
    <path d="M875.500 18V548" stroke="#dcdcdc" />
    <Label transform="translate(309 49) rotate(-90)" $c="#4f81bd" $anchor="start">15.32</Label>
    <Label transform="translate(462 49) rotate(-90)" $c="#92cddc" $anchor="start">16.26</Label>
    <Label transform="translate(754 49) rotate(-90)" $c="#92cddc" $anchor="start">18.14</Label>

    <path d="M501 420L595 395V405L501 430Z" fill="#c98f88" opacity=".8" />
    <path d="M56 459H384L876 325.500" fill="none" stroke="#e0a0b4" />
    <path d="M56 457.500H384L876 324" fill="none" stroke="#4a3fc0" strokeWidth="2" />
    <path d="M56 519.500L384 518.500L876 377" fill="none" stroke="#0a7d14" strokeWidth="2" />
    <circle cx="545.500" cy="459.500" r="4" fill="#f00" stroke="#000" />
    <rect x="880" y="452" width="47" height="14" fill="#c00" />
    <Label x="883" y="463" $anchor="start" $c="#fff">-1,000</Label>
    <rect x="528.500" y=".5" width="33" height="13" fill="#e8f0f8" stroke="#44546a" />
    <Label x="545" y="12" $c="#000">-2.1%</Label>

    <rect x="4.500" y="568.500" width="921" height="183" rx="6" fill="#e8f0f8" stroke="#44546a" />
    {greeks.map((g) => (
      <GreekStrip key={g.name} g={g} />
    ))}
    {pnlPct.map((v, i) => (
      <g key={v}>
        <Label x={328 + i * 81.3} y="585" $c="#ee6a70">{v}</Label>
        <Label x={328 + i * 81.3} y="596" $c="#ee6a70">{pnlVal[i]}</Label>
      </g>
    ))}

    <rect x="520.500" y="552.500" width="49" height="199" rx="6" fill="#e6eefa" fillOpacity=".86" stroke="#44546a" />
    <Label x="545" y="564" $c="#000">16.84</Label>
    <Label x="545" y="597" $c="#f00">-1,000</Label>
    <Label x="545" y="612" $c="#f00">-41.9%</Label>
    {greeks.slice(1).map((g) => (
      <Label key={g.name} x="545" y={g.y + 6} $c={g.now < 0 ? "#f00" : "#00f"}>{g.now}</Label>
    ))}
  </ChartSvg>
)

/* ---------- sections ---------- */

const Ribbon = () => (
  <RibbonBar>
    <Group $w={115}>
      <GroupBody $gap={14} $pad="8px 8px 0 8px">
        <BigButton><SettingsIcon />Settings</BigButton>
        <BigButton><ImportIcon />Import</BigButton>
      </GroupBody>
      <GroupTitle>Accounts</GroupTitle>
    </Group>
    <Group $w={74}>
      <GroupBody $pad="8px 10px 0 8px">
        <BigButton><ReportsIcon />Reports</BigButton>
      </GroupBody>
      <GroupTitle>Reports</GroupTitle>
    </Group>
    <Group $w={165}>
      <GroupBody>
        <BigButton><TradeLogIcon />Trade Log</BigButton>
        <BigButton><TradeLogIcon plus />Commit Trade</BigButton>
      </GroupBody>
      <GroupTitle>Trade Log</GroupTitle>
    </Group>
    <Group $w={270}>
      <GroupBody $pad="7px 10px 0 8px">
        <Stack $gap={6}>
          <DateField>
            <input aria-label="Trading date" defaultValue="mi. 16 sep. 2026" />
            <CalendarIcon />
            <BarsIcon />
            <button>Exp</button>
            <button disabled>LIVE</button>
          </DateField>
          <StepRow>
            <Chevrons />
            <button disabled>5m-</button>
            <button disabled>45m-</button>
            <button>Day-</button>
            <button disabled>Day+</button>
            <button disabled>45m+</button>
            <button disabled>5m+</button>
            <Chevrons flip />
          </StepRow>
        </Stack>
      </GroupBody>
      <GroupTitle>Trading Date &amp; Time</GroupTitle>
    </Group>
    <Group $w={480}>
      <GroupBody $pad="5px 0 0 9px">
        <WindowGrid>
          {["Watchlist", "Risk Chart", "Option Chain", "Monitor Grid", "Earnings", "Analysis", "Price Chart", "Orders", "Monitor Dock", "RSS Feed"].map((name) => (
            <SmallButton key={name} disabled={name === "Earnings" || name === "Orders"}>
              <SmallIcon name={name} />
              {name}
            </SmallButton>
          ))}
        </WindowGrid>
      </GroupBody>
      <GroupTitle>
        Windows
        <svg width="7" height="7" viewBox="0 0 7 7"><path d="M7 0V7H0Z" fill="#5a6b86" /></svg>
      </GroupTitle>
    </Group>
    <Group $w={181}>
      <GroupBody $gap={14} $pad="7px 0 0 9px">
        <BigButton disabled><PlayIcon />Play</BigButton>
        <Stack $gap={5}>
          <InlineField>
            <label htmlFor="interval">Interval</label>
            <Select id="interval" w={50} value="Day" />
          </InlineField>
          <InlineField $gap={6}>
            <label htmlFor="speed">Speed</label>
            <svg width="9" height="4" viewBox="0 0 9 4"><rect x=".5" y=".5" width="8" height="3" fill="#fff" stroke={navy} /></svg>
            <Range id="speed" type="range" defaultValue="100" $w={44} $ticked $edge={navy} $thumb={5} />
            <svg width="9" height="9" viewBox="0 0 9 9"><path d="M3.500.5h2v3h3v2h-3v3h-2v-3h-3v-2h3Z" fill="#fff" stroke={navy} /></svg>
          </InlineField>
        </Stack>
      </GroupBody>
      <GroupTitle>Playback</GroupTitle>
    </Group>
    <Brand>
      <AtomLogo />
      <BrandText>
        <strong>Option<b>NET</b></strong>
        <em>EXPLORER</em>
        <small>v2.0.94 BETA 23/04/2026</small>
      </BrandText>
    </Brand>
  </RibbonBar>
)

const OptionChain = ({ title, rows, nav, h }) => (
  <Chain $h={h}>
    <ChainBox $w={60} $open={nav}>
      {nav && (
        <ChainNav $start>
          <button aria-label="Previous expiration"><TriIcon /></button>
          <button aria-label="Next expiration"><TriIcon flip /></button>
        </ChainNav>
      )}
      <StrikeTable>
        <thead>
          <tr><th>{title}</th></tr>
        </thead>
        <tbody>
          {rows.map(([strike, , band, itm]) => (
            <tr key={strike}>
              <StrikeCell $itm={itm} $band={band} $atm={strike === 17}>{strike}</StrikeCell>
            </tr>
          ))}
        </tbody>
      </StrikeTable>
    </ChainBox>
    <ChainBox $open={nav}>
      {nav && <ChainNav>23 sep. 26 (7)</ChainNav>}
      <ChainScroll>
        <GridWrap>
          <DataTable>
            <colgroup>
              {greekHeads.map((_, i) => (
                <col key={i} width={i < 8 ? 95 : undefined} />
              ))}
            </colgroup>
            <thead>
              <tr>
                {greekHeads.map((name, i) => (
                  <th key={i}>{name}</th>
                ))}
              </tr>
            </thead>
            <tbody>
              {rows.map(([strike, color, band, , values]) => {
                const cells = values.split(" ")
                return (
                  <GreekRow key={strike} $band={band}>
                    {greekHeads.map((_, i) => (
                      <ValueCell key={i} $c={i === 0 ? color : undefined}>{cells[i]}</ValueCell>
                    ))}
                  </GreekRow>
                )
              })}
            </tbody>
          </DataTable>
        </GridWrap>
        <ScrollTrack>
          <Arrow $dir="up" />
          <span />
          <Arrow />
        </ScrollTrack>
      </ChainScroll>
    </ChainBox>
  </Chain>
)

const Left = () => (
  <LeftPane>
    <SymbolBar>
      <label htmlFor="symbol">Symbol</label>
      <Select id="symbol" w={66} value="VIX" />
      <label htmlFor="openpos">Open Position (1)</label>
      <Select id="openpos" w={170} h={19} value="#936 Custom" />
      <SymbolTools>
        <CommitButton><CommitIcon />Commit</CommitButton>
        <button aria-label="Inspect"><LensIcon /></button>
        <button aria-label="Columns"><ColumnsIcon /></button>
        <button aria-label="Delete"><DeleteIcon /></button>
        <button aria-label="Options"><GearIcon /></button>
      </SymbolTools>
    </SymbolBar>
    <QuoteRow>
      <QuoteBox>
        <DataTable>
          <colgroup>
            {quote.map(([name], i) => (
              <col key={name} width={i < 10 ? 55 : undefined} />
            ))}
          </colgroup>
          <thead>
            <tr>
              {quote.map(([name]) => (
                <th key={name}>{name}</th>
              ))}
            </tr>
          </thead>
          <tbody>
            <tr>
              {quote.map(([name, value, color]) => (
                <ValueCell key={name} $c={color}>{value}</ValueCell>
              ))}
            </tr>
          </tbody>
        </DataTable>
      </QuoteBox>
      <div>
        <DataTable>
          <colgroup>
            <col width="63" />
            <col />
          </colgroup>
          <thead>
            <tr><th>Div</th><th /></tr>
          </thead>
          <tbody>
            <tr><td /><td /></tr>
          </tbody>
        </DataTable>
      </div>
    </QuoteRow>
    <Dots h={12} />
    <OptionChain title="CALLS" rows={calls} nav h={327} />
    <Dots h={11} />
    <OptionChain title="PUTS" rows={puts} h={312} />
    <Dots h={13} />
    <AnalysisBar>
      <label htmlFor="combine">Trade Analysis</label>
      <Select id="combine" w={150} value="Combined" />
      <Select label="Plot mode" w={80} value="Auto" />
      <IgnoreBox>
        <Check type="checkbox" id="ignore" />
        <label htmlFor="ignore">Ignore Today's Trades</label>
      </IgnoreBox>
    </AnalysisBar>
    <AnalysisBox>
      <DataTable>
        <colgroup>
          {analysisHeads.map((name, i) => (
            <col key={name} width={i < 12 ? 72 : undefined} />
          ))}
        </colgroup>
        <thead>
          <tr>
            {analysisHeads.map((name) => (
              <th key={name}>{name}</th>
            ))}
          </tr>
        </thead>
        <tbody>
          {analysisRows.map(([name, color, values]) => (
            <tr key={name}>
              <td><RowName $c={color}><PlusBox />{name}</RowName></td>
              {values.split(" ").map((v, i) => (
                <ValueCell key={i} $c={i === 4 || i === 5 ? "#f00" : undefined} $bg={i === 8 ? "#f00" : undefined}>
                  {v}
                </ValueCell>
              ))}
              <td><Check type="checkbox" defaultChecked aria-label={"Plot " + name} /></td>
            </tr>
          ))}
        </tbody>
      </DataTable>
    </AnalysisBox>
  </LeftPane>
)

const Right = () => (
  <RightPane>
    <ChartTabs>
      <ChartTab $active>Risk Chart</ChartTab>
      <ChartTab>Price Chart</ChartTab>
      <ChartTab>Movement Analysis</ChartTab>
      <ChartTab>Volatility</ChartTab>
      <ChartTab>Statistics &amp; Fundamentals</ChartTab>
      <TabFill />
    </ChartTabs>
    <ChartFrame>
      <ProjectionBar>
        <label htmlFor="projection">Projection</label>
        <ProjectionField>
          <input id="projection" defaultValue="16/09/2026" />
          <Arrow />
          <span>T+0</span>
          <span>5Ln</span>
          <button aria-label="Earlier"><Arrow $dir="left" $color="#000" /></button>
          <button aria-label="Later"><Arrow $dir="right" $color="#000" /></button>
        </ProjectionField>
      </ProjectionBar>
      <RiskChart />
      <ZoomBar>
        <label htmlFor="zoom">100%</label>
        <button aria-label="Zoom out">−</button>
        <Range id="zoom" type="range" defaultValue="48" $w={97} $track="#fff" $thumb={3} />
        <button aria-label="Zoom in">+</button>
      </ZoomBar>
    </ChartFrame>
  </RightPane>
)

const CommitTrade = () => (
  <Dialog role="dialog" aria-labelledby="commit-title">
    <DialogTitle>
      <h2 id="commit-title">Commit Trade</h2>
      <button aria-label="Maximize"><MaxIcon w={10} h={7} /></button>
      <button aria-label="Close"><CloseIcon /></button>
    </DialogTitle>
    <DialogBody>
      <FieldRow>
        <label htmlFor="t-name">Trade Name</label>
        <TextInput id="t-name" $w={209} disabled defaultValue="Custom" />
      </FieldRow>
      <FieldRow>
        <label htmlFor="t-cat">Trade Category</label>
        <Select id="t-cat" w={206} h={22} right={24} disabled value="Custom">
          <CategoryGear><GearIcon muted /></CategoryGear>
        </Select>
      </FieldRow>
      <FieldRow>
        <label htmlFor="t-acc">Account</label>
        <Select id="t-acc" w={206} disabled value="Call Spreads VIX" />
      </FieldRow>
      <FieldRow>
        <label htmlFor="t-id">Trade Id</label>
        <Select id="t-id" w={206} value="#936 Custom (03 jun. 26)" />
      </FieldRow>
      <LegBox>
        <DataTable>
          <colgroup>
            {[41, 37, 94, 68, 192, 47].map((w) => (
              <col key={w} width={w} />
            ))}
            <col />
          </colgroup>
          <thead>
            <tr>
              <th>Side</th>
              <th>Qty</th>
              <th>Expiration</th>
              <th><SortHead>Strike<Arrow $dir="up" /></SortHead></th>
              <th>Symbol</th>
              <th>Type</th>
              <th>Price</th>
            </tr>
          </thead>
          <tbody>
            {legs.map((leg) => (
              <LegRow key={leg[0]} $side={leg[0]}>
                {leg.map((v, i) => (
                  <td key={i}>{v}</td>
                ))}
              </LegRow>
            ))}
          </tbody>
        </DataTable>
      </LegBox>
      <Gauge>
        <GaugeEnds><span>-0.67</span><span>-0.54</span></GaugeEnds>
        <GaugeRow>
          <span>Ask</span>
          <GaugeTrack>
            <svg width="231" height="14" viewBox="0 0 231 14">
              <path d="M0 12h231M4 2v10M228 2v10" stroke="#000" strokeWidth="2" />
              <path d="M55.500 3v6M107.500 3v6M158.500 3v6M210.500 3v6" stroke="#333" />
            </svg>
            <input type="range" aria-label="Price between ask and bid" defaultValue="50" />
          </GaugeTrack>
          Bid
        </GaugeRow>
        <GaugeMid>Mid</GaugeMid>
      </Gauge>
      <FieldRow $label={188} $h={24}>
        <label htmlFor="t-price">Price</label>
        <SpinWrap>
          <TextInput id="t-price" $w={117} $pad={18} $align="right" defaultValue="-0.605" />
          <SpinButtons>
            <button aria-label="Increase"><Arrow $dir="up" /></button>
            <button aria-label="Decrease"><Arrow /></button>
          </SpinButtons>
        </SpinWrap>
        <AfterField $gap={6}><LockIcon />Debit</AfterField>
      </FieldRow>
      <FieldRow $label={188} $h={24}>
        <label htmlFor="t-order">Order Type</label>
        <Select id="t-order" w={117} value="Limit" />
        <AfterField $gap={10} $indent={8}>
          <label htmlFor="t-tif">Time In Force</label>
          <Select id="t-tif" w={57} value="Day" />
        </AfterField>
      </FieldRow>
      <SnapTabs>
        <SnapTab>Spread Price History</SnapTab>
        <SnapTab $active>Position Snapshot &amp; Comments</SnapTab>
      </SnapTabs>
      <SnapPanel>
        <SnapFields>
          {[
            ["Underlying Price", "16.84", 75, true],
            ["IV %", "82.88", 75, true],
            ["Margin Override", "", 69],
            ["Profit Target %", "15", 66],
            ["Max Loss %", "-10", 63],
          ].map(([name, value, w, off]) => (
            <div key={name}>
              <label htmlFor={name}>{name}</label>
              <TextInput id={name} $w={w} $align="right" disabled={off} defaultValue={value} />
            </div>
          ))}
        </SnapFields>
        <CommentBox>
          <textarea aria-label="Trade comments" defaultValue="Please enter your trade comments here" />
          <ScrollTrack>
            <Arrow $dir="up" />
            <Arrow />
          </ScrollTrack>
        </CommentBox>
      </SnapPanel>
      <DialogFoot>
        <SplitButton>
          <PushButton $w={142}>Interactive Brokers</PushButton>
          <PushButton $w={17} aria-label="Choose broker"><Arrow /></PushButton>
        </SplitButton>
        <PushButton $w={66}>Save</PushButton>
        <PushButton $w={70}>Cancel</PushButton>
      </DialogFoot>
    </DialogBody>
  </Dialog>
)

const App = () => (
  <Screen>
    <GlobalStyle />
    <AppWindow>
      <TitleBar>
        <MoleculeIcon />
        <span>OptionNET Explorer</span>
        <WindowButtons>
          <button aria-label="Minimize"><svg width="16" height="16"><path d="M4 10.500h9" stroke="#000" strokeWidth="3" /></svg></button>
          <button aria-label="Restore"><svg width="16" height="16"><path d="M4.500 4v8.500h8V4M4 4.500h9" fill="none" stroke="#000" /><path d="M4 5h9" stroke="#000" strokeWidth="2" /></svg></button>
          <button aria-label="Close window"><svg width="16" height="16"><path d="M5 4.500l7 7M12 4.500l-7 7" stroke="#000" strokeWidth="1.700" /></svg></button>
        </WindowButtons>
      </TitleBar>
      <MenuBar>
        <MenuTab href="#home" $active>Home</MenuTab>
        <MenuTab href="#configuration">Configuration</MenuTab>
        <MenuTab href="#tools">Tools</MenuTab>
        <MenuTab href="#support">Support</MenuTab>
        <MenuEnd>
          <Arrow $dir="up" $color={navy} />
          <HelpIcon />
          <span>User: Richard Saenz</span>
        </MenuEnd>
      </MenuBar>
      <Ribbon />
      <DocBar>
        <DocTab href="#spx">Analysis: SPX</DocTab>
        <DocTab href="#rut">Analysis: RUT</DocTab>
        <DocTab href="#vix" $active>Analysis: VIX <svg width="8" height="8"><path d="M1 1l6 6M7 1l-6 6" stroke="#a9b3c6" strokeWidth="1.500" /></svg></DocTab>
        <AccountInfo>
          Account: Call Spreads VIX
          <span />
          <Arrow $color={panel} />
        </AccountInfo>
      </DocBar>
      <Workspace>
        <WorkspaceInner>
          <Left />
          <Right />
        </WorkspaceInner>
      </Workspace>
    </AppWindow>
    <CommitTrade />
  </Screen>
)

export default App
